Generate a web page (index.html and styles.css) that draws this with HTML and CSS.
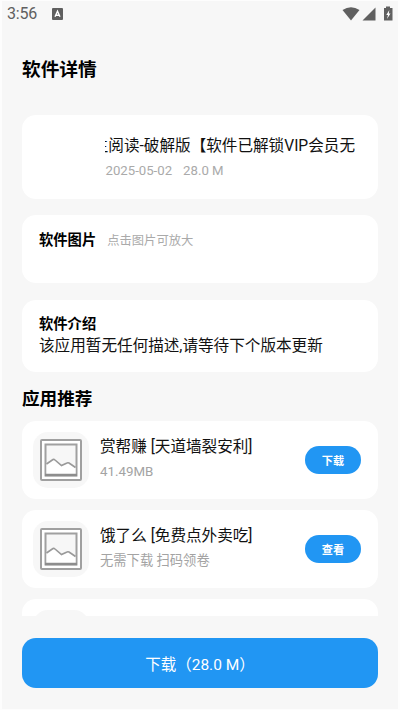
FILE: index.html
```html
<!DOCTYPE html>
<html lang="zh-CN">
<head>
<meta charset="utf-8">
<title>软件详情</title>
<link rel="stylesheet" href="styles.css">
</head>
<body>
<svg class="defs" width="0" height="0">
  <symbol id="picture" viewBox="0 0 42 42">
    <rect x="1" y="1" width="40" height="40" rx="1" fill="#fff" stroke="#a0a0a0" stroke-width="2"/>
    <rect x="5.500" y="5.500" width="31" height="31" fill="#f7f7f7" stroke="#a0a0a0" stroke-width="2"/>
    <path d="M6.500 25.500 13 20.500Q14 20 15 21L21.500 26.500 27 24Q28 23.500 29 24L35.500 28.500V35H6.500Z" fill="#fff"/>
    <path d="M6.500 25 13 20.500Q14 20 15 21L21.500 26.500 27 24Q28 23.500 29 24L35.500 28.500" fill="none" stroke="#999" stroke-width="1.600"/>
    <path d="M5 36H37" stroke="#8d8d8d" stroke-width="2.500"/>
  </symbol>
</svg>
<div class="screen">
  <header class="status">
    <span class="time">3:56</span>
    <svg class="badge" width="11" height="12" viewBox="0 0 11 12"><rect width="11" height="12" rx="1" fill="#5f5f5f"/><path d="M3 8.700 5.500 3.200 8 8.700M4 7.200H7" fill="none" stroke="#fff" stroke-width="1.400"/></svg>
    <svg class="signals" width="52" height="16" viewBox="0 0 52 16"><path d="M.5 4Q9 -1.500 17.500 4L9 14.500Z" fill="#606060"/><path d="M20.500 14.500 33.500 1.500V14.500Z" fill="#606060"/><path d="M42 2H44V.5H48V2H50.500V14.500H42Z" fill="#606060"/><path d="M47.300 4 44.300 9H46L45 13 48.500 7.500H46.800Z" fill="#fff"/></svg>
  </header>
  <h1>软件详情</h1>
  <main>
    <section class="card app">
      <div class="marquee"><span>主阅读-破解版【软件已解锁VIP会员无</span></div>
      <p class="meta"><span>2025-05-02</span><span>28.0 M</span></p>
    </section>
    <section class="card shots"><h3>软件图片</h3><span>点击图片可放大</span></section>
    <section class="card intro"><h3>软件介绍</h3><p>该应用暂无任何描述,请等待下个版本更新</p></section>
    <h2>应用推荐</h2>
    <div class="list">
      <article class="card item">
        <div class="thumb"><svg width="42" height="42"><use href="#picture"/></svg></div>
        <div class="info"><p class="name">赏帮赚 [天道墙裂安利]</p><p class="sub">41.49MB</p></div>
        <button>下载</button>
      </article>
      <article class="card item">
        <div class="thumb"><svg width="42" height="42"><use href="#picture"/></svg></div>
        <div class="info"><p class="name">饿了么 [免费点外卖吃]</p><p class="sub">无需下载 扫码领卷</p></div>
        <button>查看</button>
      </article>
      <article class="card item"><div class="thumb"></div></article>
    </div>
  </main>
  <footer><button class="download">下载（28.0 M）</button></footer>
</div>
</body>
</html>
```
FILE: styles.css
```css
* { box-sizing: border-box; margin: 0; padding: 0; }
body { background: #fdfdfd; font-family: Roboto, "Noto Sans CJK SC", sans-serif; color: #111; }
.defs { display: block; height: 0; }
.screen { width: 400px; height: 710px; border: solid #fdfdfd; border-width: 1px 2px; background: #f7f7f7; display: flex; flex-direction: column; padding: 0 20px; overflow: hidden; }
.status { height: 25px; flex: none; margin: 0 -15px; display: flex; align-items: center; color: #606060; }
.time { font-size: 16px; line-height: 20px; letter-spacing: -0.2px; width: 45px; }
.signals { margin-left: auto; margin-right: -1px; }
h1 { height: 89px; flex: none; padding-top: 30px; font-size: 18.7px; line-height: 28px; color: #000; }
main { height: 501px; flex: none; overflow: hidden; }
.card { background: #fff; border-radius: 14px; }
.app { height: 84px; padding: 19px 23px 0 83px; }
.marquee { height: 25px; overflow: hidden; white-space: nowrap; display: flex; justify-content: flex-end; font-size: 15.6px; line-height: 25px; }
.meta { display: flex; gap: 11px; color: #aaa; font-size: 13.2px; line-height: 18px; margin-top: 3px; padding-left: 0.5px; }
.shots { height: 68px; margin-top: 16px; padding: 14px 17px; display: flex; gap: 11px; line-height: 22px; }
.shots span { font-size: 12.3px; line-height: 25px; color: #aaa; }
h3 { font-size: 14.3px; color: #000; }
.intro { height: 72px; margin-top: 17px; padding: 14px 17px; }
.intro h3 { line-height: 21px; }
.intro p { font-size: 15.6px; line-height: 22px; white-space: nowrap; }
h2 { font-size: 17.6px; line-height: 26px; height: 35px; margin-top: 14px; color: #000; }
.list { display: flex; flex-direction: column; gap: 11px; }
.item { height: 78px; padding: 0 17px 0 11px; display: flex; align-items: center; }
.thumb { width: 56px; height: 56px; border-radius: 15px; background: #f7f7f7; display: flex; align-items: center; justify-content: center; }
.thumb svg { display: block; }
.info { margin-left: 11px; padding-bottom: 2px; flex: 1; white-space: nowrap; }
.name { font-size: 15.6px; line-height: 25px; }
.sub { font-size: 13.3px; line-height: 24px; color: #a3a3a3; }
button { border: 0; background: #2196f3; color: #fff; font-family: inherit; }
.item button { width: 56px; height: 28px; border-radius: 14px; font-size: 11.2px; font-weight: 700; }
footer { padding-top: 22px; }
.download { display: block; width: 100%; height: 50px; border-radius: 14px; font-size: 15.5px; }
```
